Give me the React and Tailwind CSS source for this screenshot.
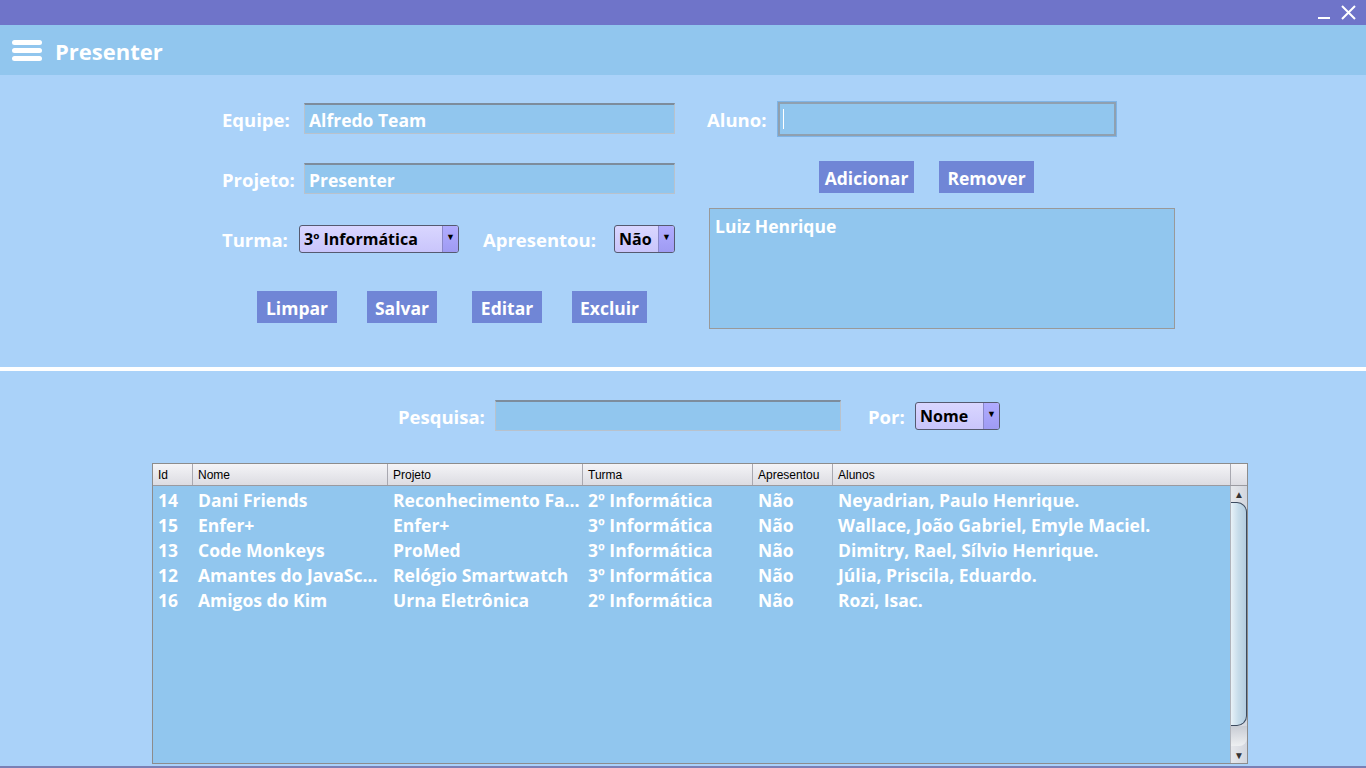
import { Fragment } from "react";

const font = { fontFamily: '"Open Sans", "Noto Sans", sans-serif' };

const rows = [
  ["14", "Dani Friends", "Reconhecimento Fa...", "2º Informática", "Não", "Neyadrian, Paulo Henrique."],
  ["15", "Enfer+", "Enfer+", "3º Informática", "Não", "Wallace, João Gabriel, Emyle Maciel."],
  ["13", "Code Monkeys", "ProMed", "3º Informática", "Não", "Dimitry, Rael, Sílvio Henrique."],
  ["12", "Amantes do JavaSc...", "Relógio Smartwatch", "3º Informática", "Não", "Júlia, Priscila, Eduardo."],
  ["16", "Amigos do Kim", "Urna Eletrônica", "2º Informática", "Não", "Rozi, Isac."],
];

const cols = [
  ["Id", "w-[40px]"],
  ["Nome", "w-[195px]"],
  ["Projeto", "w-[195px]"],
  ["Turma", "w-[170px]"],
  ["Apresentou", "w-[80px]"],
  ["Alunos", "flex-1"],
];

const Field = ({ value, className = "" }) => (
  <div
    className={`flex h-[31px] items-center border border-t-2 border-[#b9c2cc] border-t-[#7d8c9c] bg-[#91c6ee] px-[4px] pt-[2px] text-[17.5px] font-bold text-white ${className}`}
  >
    {value}
  </div>
);

const Combo = ({ value, className = "" }) => (
  <div
    className={`flex h-[28px] items-stretch overflow-hidden rounded-[3px] border border-[#555a70] bg-gradient-to-b from-[#d9d6ff] to-[#c9c5fb] ${className}`}
  >
    <div className="flex flex-1 items-center pl-[4px] pt-[1px] text-[16px] font-bold text-black">{value}</div>
    <div className="flex w-[16px] items-start justify-center border-l border-[#8a88c8] bg-gradient-to-b from-[#b0acff] to-[#9f9bf3] pt-[6px] text-[9px] leading-none text-black">
      ▼
    </div>
  </div>
);

const Btn = ({ children, className = "" }) => (
  <button className={`h-[32px] bg-[#7086d6] pt-[3px] text-[17.5px] font-bold text-white ${className}`}>{children}</button>
);

const Label = ({ children, className = "" }) => (
  <span className={`pt-[3px] text-[18.5px] font-bold text-white ${className}`}>{children}</span>
);

export default function App() {
  return (
    <div style={font} className="flex h-[768px] w-[1366px] flex-col overflow-hidden bg-[#aad2f9]">
      {/* window title bar */}
      <div className="flex h-[25px] items-start justify-end bg-[#6f74c9] pr-[10px]">
        <svg width="50" height="25" viewBox="0 0 50 25">
          <rect x="12" y="17" width="12" height="2" fill="white" />
          <path d="M36 6 L49 19 M49 6 L36 19" stroke="white" strokeWidth="2" />
        </svg>
      </div>

      {/* app header */}
      <div className="flex h-[50px] items-center gap-[13px] bg-[#91c6ee] pl-[12px]">
        <svg width="30" height="24" viewBox="0 0 30 24">
          <rect x="0" y="2" width="30" height="5" rx="2.5" fill="white" />
          <rect x="0" y="10" width="30" height="5" rx="2.5" fill="white" />
          <rect x="0" y="18" width="30" height="5" rx="2.5" fill="white" />
        </svg>
        <span className="pt-[2px] text-[22px] font-bold text-white">Presenter</span>
      </div>

      {/* form section */}
      <div className="flex h-[292px] pl-[222px] pt-[28px]">
        <div className="flex w-[453px] flex-col">
          <div className="flex h-[31px] items-center">
            <Label className="w-[82px]">Equipe:</Label>
            <Field value="Alfredo Team" className="flex-1" />
          </div>
          <div className="mt-[29px] flex h-[31px] items-center">
            <Label className="w-[82px]">Projeto:</Label>
            <Field value="Presenter" className="flex-1" />
          </div>
          <div className="mt-[29px] flex h-[31px] items-center">
            <Label className="w-[77px]">Turma:</Label>
            <Combo value="3º Informática" className="w-[160px]" />
            <Label className="ml-[24px]">Apresentou:</Label>
            <Combo value="Não" className="ml-auto w-[61px]" />
          </div>
          <div className="mt-[37px] flex pl-[35px]">
            <Btn className="w-[80px]">Limpar</Btn>
            <Btn className="ml-[30px] w-[70px]">Salvar</Btn>
            <Btn className="ml-[35px] w-[70px]">Editar</Btn>
            <Btn className="ml-[30px] w-[75px]">Excluir</Btn>
          </div>
        </div>

        <div className="ml-[32px] flex flex-col">
          <div className="flex h-[31px] items-center">
            <Label className="w-[71px]">Aluno:</Label>
            <div className="flex h-[34px] w-[338px] items-center border-2 border-[#8fa0b0] bg-[#91c6ee] pl-[3px] outline outline-1 outline-[#7fb4e6]">
              <div className="h-[20px] w-px bg-white" />
            </div>
          </div>
          <div className="mt-[27px] flex pl-[112px]">
            <Btn className="w-[95px]">Adicionar</Btn>
            <Btn className="ml-[25px] w-[95px]">Remover</Btn>
          </div>
          <div className="ml-[2px] mt-[15px] h-[121px] w-[466px] border border-[#999] bg-[#91c6ee] px-[5px] pt-[4px] text-[17.5px] font-bold text-white">
            Luiz Henrique
          </div>
        </div>
      </div>

      <div className="h-[4px] bg-white" />

      {/* search + table */}
      <div className="flex flex-1 flex-col">
        <div className="mt-[29px] flex h-[31px] items-center pl-[398px]">
          <Label className="w-[97px]">Pesquisa:</Label>
          <Field value="" className="w-[346px]" />
          <Label className="ml-[27px] w-[47px]">Por:</Label>
          <Combo value="Nome" className="h-[27px] w-[85px]" />
        </div>

        <div className="ml-[152px] mt-[32px] flex h-[301px] w-[1096px] flex-col border border-[#8c8c8c] bg-[#91c6ee]">
          <div className="flex h-[22px] border-b border-[#9a9aa0] bg-gradient-to-b from-[#f4f4f7] to-[#dcdce2] text-[12px] text-black" style={{ fontFamily: '"Liberation Sans", Arial, sans-serif' }}>
            {cols.map(([c, w]) => (
              <div key={c} className={`${w} flex items-center border-r border-[#a8a8b0] pl-[5px]`}>
                {c}
              </div>
            ))}
            <div className="w-[16px]" />
          </div>
          <div className="flex flex-1">
            <div className="flex flex-1 flex-col pt-[1px]">
              {rows.map((r) => (
                <div key={r[0]} className="flex h-[25px] items-center pt-[1px] text-[17.5px] font-bold text-white">
                  {r.map((v, i) => (
                    <Fragment key={i}>
                      <div className={`${cols[i][1]} overflow-hidden whitespace-nowrap pl-[5px]`}>{v}</div>
                    </Fragment>
                  ))}
                </div>
              ))}
            </div>
            {/* scrollbar */}
            <div className="flex w-[17px] flex-col border-l border-[#b0b4bc] bg-gradient-to-r from-[#e6e8ec] to-[#d2d6de]">
              <div className="flex h-[16px] items-center justify-center text-[10px] leading-none text-[#333]">▲</div>
              <div className="h-[224px] rounded-r-[10px] border border-l-0 border-[#3c4a5e] bg-gradient-to-r from-[#e8f2f8] via-[#c6dcea] to-[#b4cde0]" />
              <div className="h-[20px] rounded-br-[8px] bg-gradient-to-b from-[#c8ccd4] to-[#eef0f2]" />
              <div className="flex-1" />
              <div className="flex h-[16px] items-center justify-center text-[10px] leading-none text-[#333]">▼</div>
            </div>
          </div>
        </div>
      </div>

      <div className="h-[2px] bg-[#7a80b5]" />
    </div>
  );
}
